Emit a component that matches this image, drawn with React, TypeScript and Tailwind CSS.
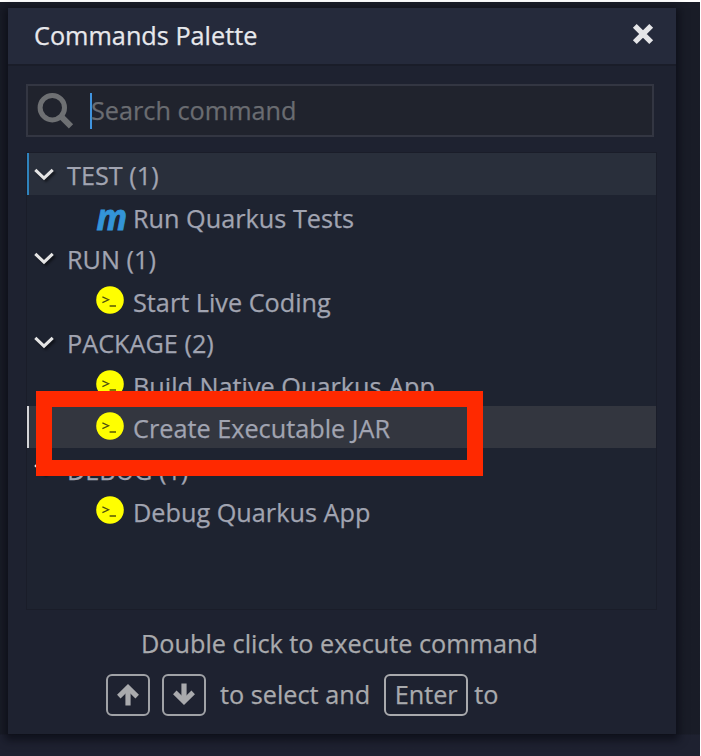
import type { ReactNode } from "react";

function Chevron() {
  return (
    <svg className="w-[24px] h-[20px] shrink-0 drop-shadow-[2px_2px_1px_rgba(0,0,0,0.5)]" viewBox="0 0 24 20" fill="none">
      <path d="M3.3 5.9 L12 14.1 L20.7 5.9" stroke="#e4e4e4" strokeWidth="3.1" />
    </svg>
  );
}

function TerminalIcon() {
  return (
    <svg className="w-[28px] h-[28px] shrink-0" viewBox="0 0 28 28" fill="none">
      <circle cx="14" cy="14" r="13.8" fill="#ffff00" />
      <path d="M6.4 10.9 L12.6 13.7 L6.4 16.6" stroke="#4d4d10" strokeWidth="1.2" />
      <path d="M13.6 20 H20" stroke="#2a2a08" strokeWidth="1.2" />
    </svg>
  );
}

function MavenIcon() {
  return (
    <span className="flex h-[28px] w-[31px] items-center text-[36px] leading-[28px] font-bold italic text-[#3395d8] font-['Noto_Sans',sans-serif] [-webkit-text-stroke:0.8px]">
      <span className="origin-left translate-x-[0.5px] translate-y-px scale-x-[0.94]">m</span>
    </span>
  );
}

function Group({ label, active }: { label: string; active?: boolean }) {
  return (
    <div className={active ? "flex h-[42.1px] items-center border-l-2 border-[#2f83bd] bg-[#292f3b] pl-[3px]" : "flex h-[42.1px] items-center pl-[5px]"}>
      <Chevron />
      <span className="ml-[11px] pt-[2px]">{label}</span>
    </div>
  );
}

function Command({ label, icon, selected }: { label: string; icon: ReactNode; selected?: boolean }) {
  return (
    <div className={selected ? "flex h-[42.1px] items-center border-l-2 border-[#d4d5d8] bg-[#33363f] pl-[67px]" : "flex h-[42.1px] items-center pl-[69px]"}>
      <span className="w-[37px] shrink-0 pb-px">{icon}</span>
      <span className="pt-[3px]">{label}</span>
    </div>
  );
}

function ArrowKey({ down }: { down?: boolean }) {
  return (
    <span className="flex h-[42px] w-[44px] items-center justify-center rounded-[6px] border-2 border-[#a0a2a6]">
      <svg className={down ? "mt-[-2px] h-[24px] w-[24px] rotate-180" : "h-[24px] w-[24px]"} viewBox="0 0 24 24" fill="none" stroke="#a9aaad">
        <path d="M12 5 V22.5" strokeWidth="5.2" />
        <path d="M2.8 13.6 L12 4.6 L21.2 13.6" strokeWidth="5" />
      </svg>
    </span>
  );
}

export default function App() {
  return (
    <div className="h-[756px] w-[701px] overflow-hidden bg-white pt-[2px] pr-px font-['Open_Sans',sans-serif] text-[25.25px] leading-[34px] whitespace-nowrap [-webkit-text-stroke:0.25px]">
      <div className="h-[754px] w-[700px] bg-linear-to-b from-[#191c27] from-[732px] to-[#1e2130] to-[733px] pt-[6px] pl-[8px]">
        <div className="relative flex h-[726px] w-[668px] flex-col bg-[#1e2230] shadow-[0_3px_8px_3px_rgba(8,10,18,0.7)]">
          <header className="flex h-[58px] shrink-0 items-center justify-between border-b-2 border-[#1a1d29] bg-[#252a3b] pr-[22px] pl-[26px] text-[#e7e8ec]">
            <span className="mt-[-3px]">Commands Palette</span>
            <svg className="mt-[-5px] h-[22px] w-[22px]" viewBox="0 0 22 22">
              <path d="M2.8 2.8 L19.2 19.2 M19.2 2.8 L2.8 19.2" stroke="#e5e5e8" strokeWidth="5.4" />
            </svg>
          </header>

          <div className="mt-[18px] ml-[18px] flex h-[53px] w-[628px] shrink-0 items-center border-2 border-[#333642] bg-[#20232d]">
            <svg className="ml-[9px] h-[37px] w-[37px]" viewBox="0 0 37 37" fill="none">
              <circle cx="15.3" cy="15.7" r="12.2" stroke="#6e7073" strokeWidth="5" />
              <path d="M24 24.4 L34 34.4" stroke="#6e7073" strokeWidth="6" />
            </svg>
            <span className="ml-[16px] h-[36px] w-[2px] bg-[#4094df]" />
            <span className="mt-[-2px] -ml-px text-[#6a6c71]">Search command</span>
          </div>

          <div className="mt-[15px] ml-[18px] h-[458px] w-[631px] shrink-0 border border-[#1a1d29] bg-[#1e2330] text-[#a1a4b1]">
            <Group label="TEST (1)" active />
            <Command label="Run Quarkus Tests" icon={<MavenIcon />} />
            <Group label="RUN (1)" />
            <Command label="Start Live Coding" icon={<TerminalIcon />} />
            <Group label="PACKAGE (2)" />
            <Command label="Build Native Quarkus App" icon={<TerminalIcon />} />
            <Command label="Create Executable JAR" icon={<TerminalIcon />} selected />
            <Group label="DEBUG (1)" />
            <Command label="Debug Quarkus App" icon={<TerminalIcon />} />
          </div>

          <footer className="text-[#a9aaad]">
            <div className="mt-[16px] pl-[133px]">Double click to execute command</div>
            <div className="mt-[14px] flex h-[42px] items-center pl-[98px]">
              <ArrowKey />
              <span className="w-[12px]" />
              <ArrowKey down />
              <span className="mt-[-2px] ml-[14px]">to select and</span>
              <span className="ml-[14px] flex h-[42px] w-[84px] items-center justify-center rounded-[6px] border-2 border-[#a9aaad] pb-[2px]">Enter</span>
              <span className="mt-[-2px] ml-[6px]">to</span>
            </div>
          </footer>

          <div className="absolute top-[383px] left-[28px] h-[85px] w-[447px] border-[16px] border-[#ff2900]" />
        </div>
      </div>
    </div>
  );
}
